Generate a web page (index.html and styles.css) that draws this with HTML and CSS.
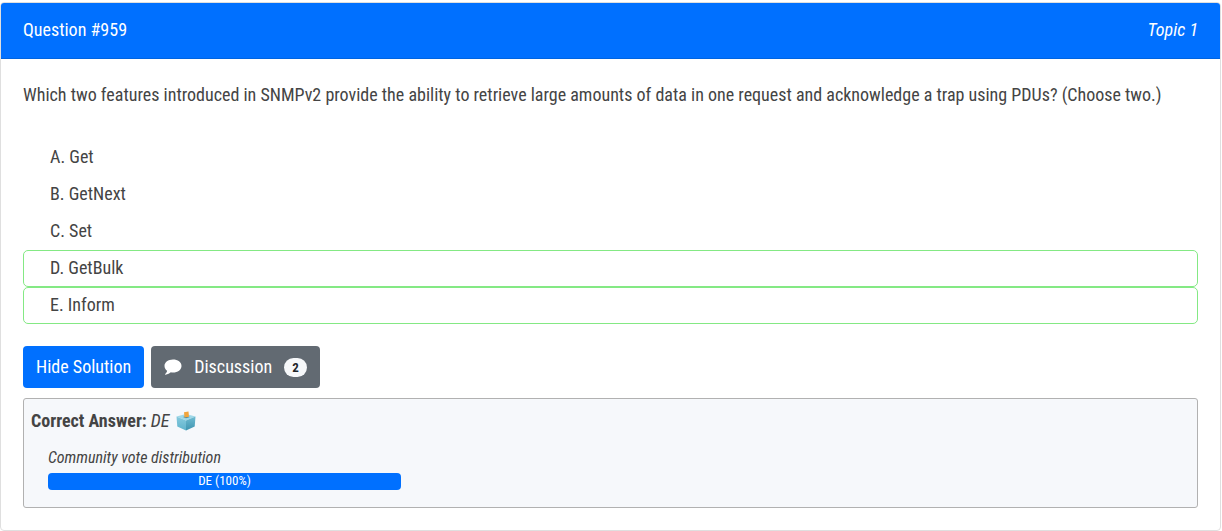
FILE: index.html
```html
<!DOCTYPE html>
<html lang="en">
<head>
<meta charset="utf-8">
<meta name="viewport" content="width=device-width, initial-scale=1">
<title>Question #959</title>
<link rel="stylesheet" href="styles.css">
</head>
<body>
<main class="card">
  <header class="card-header">
    <span>Question #959</span>
    <span class="topic">Topic 1</span>
  </header>
  <div class="card-body">
    <p class="question">Which two features introduced in SNMPv2 provide the ability to retrieve large amounts of data in one request and acknowledge a trap using PDUs? (Choose two.)</p>
    <ul class="choices">
      <li class="choice">A. Get</li>
      <li class="choice">B. GetNext</li>
      <li class="choice">C. Set</li>
      <li class="choice correct">D. GetBulk</li>
      <li class="choice correct">E. Inform</li>
    </ul>
    <div class="actions">
      <button type="button" class="btn btn-primary">Hide Solution</button>
      <button type="button" class="btn btn-secondary">
        <svg class="comment" viewBox="0 0 18 16" aria-hidden="true"><path fill="#fff" d="M9 .5C4.200.5.5 3.300.5 6.900c0 2.100 1.200 3.900 2.600 4.900-.2 1.300-.9 2.200-1.900 3.200-.3.3-.1.700.3.7 2.500-.2 4.100-1.200 5.300-2.400.7.1 1.500.2 2.200.2 4.800 0 8.500-2.900 8.500-6.600S13.800.5 9 .5z"/></svg>
        <span>Discussion</span>
        <span class="badge">2</span>
      </button>
    </div>
    <section class="answer">
      <div class="answer-line">
        <strong>Correct Answer:</strong>
        <em>DE</em>
        <svg class="ballot" viewBox="0 0 20 20" aria-hidden="true">
          <defs>
            <linearGradient id="left-face" x1="0" y1="0" x2="0" y2="1"><stop offset="0" stop-color="#86cade"/><stop offset="1" stop-color="#5fb3cc"/></linearGradient>
            <linearGradient id="right-face" x1="0" y1="0" x2="0" y2="1"><stop offset="0" stop-color="#6fbcd2"/><stop offset="1" stop-color="#3f94b0"/></linearGradient>
          </defs>
          <path fill="#9fd8e8" d="M.5 5.500 10 3l9.500 2.500L10 9.500z"/>
          <path fill="url(#left-face)" d="M.5 5.500 10 9.500v10L1.300 15.500z"/>
          <path fill="url(#right-face)" d="M19.500 5.500 10 9.500v10l8.700-4z"/>
          <path fill="#4d8a9c" d="M7 6 10 5l4 1-4 1.300z"/>
          <path fill="#f2a53c" d="M8 1.300 12.500.5 13 5.700 8.500 6.500z"/>
        </svg>
      </div>
      <div class="votes">
        <div class="votes-title">Community vote distribution</div>
        <div class="bar">DE (100%)</div>
      </div>
    </section>
  </div>
</main>
</body>
</html>
```
FILE: styles.css
```css
* { box-sizing: border-box; }

body {
  margin: 2px 1px 0 0;
  background: #fff;
  color: #444;
  font-family: "Roboto Condensed", "Liberation Sans Narrow", Roboto, sans-serif;
  font-size: 18px;
  line-height: 24px;
}

.card {
  border: 1px solid #dfdfdf;
  border-radius: 4px;
  overflow: hidden;
}

.card-header {
  display: flex;
  justify-content: space-between;
  padding: 15px 22px 16px;
  border-bottom: 1px solid #0064e0;
  background: #0070ff;
  color: #fff;
}

.topic { font-style: italic; }

.card-body { padding: 24px 22px 22px; }

.question { margin: 0 0 32px; }

.choices {
  margin: 0 0 22px;
  padding: 0;
  list-style: none;
}

.choice {
  padding: 5px 26px 6px;
  border: 1px solid transparent;
  border-radius: 5px;
}

.correct { border-color: #84e984; }

.actions {
  display: flex;
  gap: 7px;
  margin-bottom: 10px;
}

.btn {
  display: flex;
  align-items: center;
  height: 42px;
  padding: 0 13px;
  border: 0;
  border-radius: 4px;
  color: #fff;
  font: inherit;
}

.btn-primary { background: #0070ff; }

.btn-secondary {
  gap: 12px;
  background: #626a72;
}

.comment {
  width: 18px;
  height: 16px;
}

.badge {
  padding: 0 8px;
  border-radius: 10px;
  background: #f6f8fa;
  color: #212529;
  font-size: 13px;
  font-weight: 700;
  line-height: 19px;
}

.answer {
  padding: 10px 7px 17px;
  border: 1px solid #b1b1b1;
  border-radius: 3px;
  background: #f6f8fb;
}

.answer-line {
  display: flex;
  align-items: center;
  gap: 4px;
}

.ballot {
  width: 20px;
  height: 20px;
  margin-left: 3px;
}

.votes {
  width: 353px;
  margin: 11px 0 0 17px;
}

.votes-title {
  padding-bottom: 2px;
  font-size: 16px;
  font-style: italic;
  line-height: 27px;
}

.bar {
  padding-bottom: 1px;
  border-radius: 4px;
  background: #0070ff;
  color: #fff;
  font-size: 13px;
  line-height: 16px;
  text-align: center;
}
```
